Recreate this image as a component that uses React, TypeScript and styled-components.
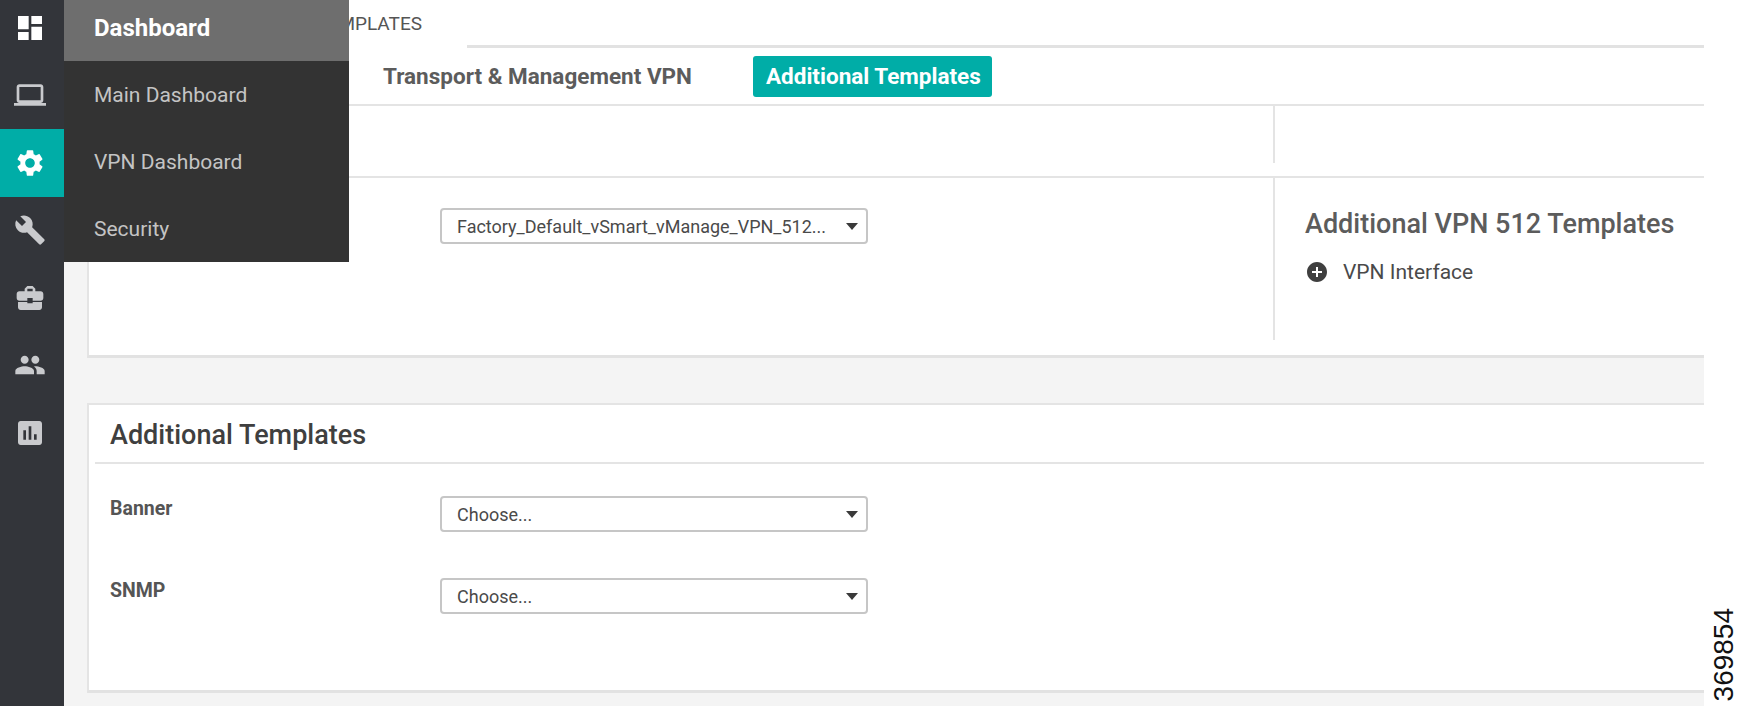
import React from 'react';
import styled, { createGlobalStyle } from 'styled-components';
import {
  MdDashboard,
  MdLaptop,
  MdSettings,
  MdBuild,
  MdBusinessCenter,
  MdPeople,
  MdAssessment,
  MdAddCircle,
} from 'react-icons/md';

const GlobalStyle = createGlobalStyle`
  html, body {
    margin: 0;
    padding: 0;
    background: #fff;
    font-family: Roboto, "Liberation Sans", sans-serif;
  }
`;

const Page = styled.div`
  position: relative;
  display: flex;
  width: 1738px;
  height: 706px;
  overflow: hidden;
  background: #fff;
`;

// left icon rail

const Rail = styled.nav`
  flex: 0 0 64px;
  background: #33353a;
  overflow: hidden;
`;

const RailList = styled.div`
  margin-top: -6px;
`;

const RailItem = styled.div<{ $active?: boolean; $bright?: boolean }>`
  display: flex;
  align-items: center;
  justify-content: center;
  height: 67.5px;
  padding-right: 4px;
  background: ${(props) => (props.$active ? '#00ada7' : 'transparent')};
  color: ${(props) => (props.$active || props.$bright ? '#fff' : '#c9cacd')};
`;

// dashboard flyout

const Flyout = styled.div`
  position: absolute;
  left: 64px;
  top: 0;
  width: 285px;
  height: 262px;
  background: #333;
`;

const FlyoutHead = styled.div`
  display: flex;
  align-items: center;
  height: 61px;
  padding: 0 0 5px 30px;
  box-sizing: border-box;
  background: #6e6e6e;
  color: #fff;
  font-size: 24px;
  font-weight: 700;
`;

const FlyoutItem = styled.div`
  display: flex;
  align-items: center;
  height: 67px;
  padding-left: 30px;
  color: #c4c4c4;
  font-size: 21px;
`;

// main content

const Main = styled.main`
  flex: 0 0 1640px;
  display: flex;
  flex-direction: column;
  background: #f4f4f4;
`;

const TabBar = styled.div`
  display: flex;
  height: 48px;
  background: #fff;
`;

const Tab = styled.div`
  display: flex;
  align-items: center;
  justify-content: flex-end;
  width: 403px;
  height: 47px;
  padding-right: 45px;
  box-sizing: border-box;
  color: #555;
  font-size: 19px;
`;

const TabRest = styled.div`
  flex: 1;
  border-bottom: 3px solid #e2e2e2;
`;

const SubTabs = styled.div`
  display: flex;
  align-items: center;
  gap: 61px;
  height: 58px;
  padding-left: 319px;
  box-sizing: border-box;
  background: #fff;
  border-bottom: 2px solid #e4e4e4;
`;

const SubTab = styled.div<{ $active?: boolean }>`
  display: flex;
  align-items: center;
  height: 41px;
  padding: ${(props) => (props.$active ? '0 11px 0 13px' : '0')};
  border-radius: 3px;
  background: ${(props) => (props.$active ? '#00ada7' : 'transparent')};
  color: ${(props) => (props.$active ? '#fff' : '#5c5c5c')};
  font-size: 22.5px;
  font-weight: 700;
`;

const SpacerRow = styled.div`
  display: flex;
  height: 72px;
  box-sizing: border-box;
  background: #fff;
  border-bottom: 2px solid #e4e4e4;
`;

const SpacerCell = styled.div`
  width: 1209px;
  height: 57px;
  border-right: 2px solid #e4e4e4;
`;

const Card = styled.section<{ $height: number; $top?: number }>`
  height: ${(props) => props.$height}px;
  margin: ${(props) => props.$top ?? 0}px 0 0 23px;
  box-sizing: border-box;
  background: #fff;
  border-left: 2px solid #e4e4e4;
  border-bottom: 3px solid #e2e2e2;
`;

const TopCard = styled(Card)`
  display: flex;
`;

const LowerCard = styled(Card)`
  border-top: 2px solid #e4e4e4;
`;

const FormColumn = styled.div`
  width: 1186px;
  height: 162px;
  padding: 30px 0 0 351px;
  box-sizing: border-box;
  border-right: 2px solid #e4e4e4;
`;

const SideColumn = styled.div`
  padding: 30px 0 0 30px;
`;

const SideTitle = styled.h3`
  margin: 0;
  color: #5c5c5c;
  font-size: 27px;
  font-weight: 500;
  line-height: 32px;
`;

const AddRow = styled.div`
  display: flex;
  align-items: center;
  gap: 16px;
  margin-top: 20px;
  padding-left: 2px;
  color: #4a4a4a;
  font-size: 21px;
`;

const PlusIcon = styled(MdAddCircle)`
  color: #3f3f3f;
  margin: -2px;
`;

const SectionTitle = styled.h2`
  display: flex;
  align-items: center;
  height: 59px;
  margin: 0 0 0 6px;
  padding: 2px 0 0 15px;
  box-sizing: border-box;
  border-bottom: 2px solid #e4e4e4;
  color: #3f3f3f;
  font-size: 27px;
  font-weight: 500;
`;

const Form = styled.div`
  display: flex;
  flex-direction: column;
  gap: 46px;
  padding: 32px 0 0 21px;
`;

const FormRow = styled.div`
  display: flex;
`;

const Label = styled.label`
  width: 330px;
  color: #555;
  font-size: 19.5px;
  font-weight: 700;
  line-height: 26px;
`;

const Select = styled.div`
  display: flex;
  align-items: center;
  justify-content: space-between;
  width: 428px;
  height: 36px;
  padding: 0 8px 0 15px;
  box-sizing: border-box;
  background: #fff;
  border: 2px solid #c6c6c6;
  border-radius: 4px;
  color: #4a4a4a;
  font-size: 18px;
`;

const Caret = styled.span`
  width: 0;
  height: 0;
  border-left: 6.5px solid transparent;
  border-right: 6.5px solid transparent;
  border-top: 7px solid #3a3a3a;
`;

const FigureNumber = styled.div`
  position: absolute;
  right: 0;
  bottom: 5px;
  writing-mode: vertical-rl;
  transform: rotate(180deg);
  color: #111;
  font-family: "Liberation Sans", Arial, sans-serif;
  font-size: 28px;
  line-height: 28px;
`;

const railIcons = [
  { icon: MdDashboard, bright: true },
  { icon: MdLaptop },
  { icon: MdSettings, active: true },
  { icon: MdBuild },
  { icon: MdBusinessCenter },
  { icon: MdPeople },
  { icon: MdAssessment },
];

const App = () => {
  return (
    <Page>
      <GlobalStyle />
      <Rail>
        <RailList>
          {railIcons.map(({ icon: Icon, active, bright }, i) => (
            <RailItem key={i} $active={active} $bright={bright}>
              <Icon size={32} />
            </RailItem>
          ))}
        </RailList>
      </Rail>

      <Main>
        <TabBar>
          <Tab>FEATURE TEMPLATES</Tab>
          <TabRest />
        </TabBar>
        <SubTabs>
          <SubTab>Transport &amp; Management VPN</SubTab>
          <SubTab $active>Additional Templates</SubTab>
        </SubTabs>
        <SpacerRow>
          <SpacerCell />
        </SpacerRow>

        <TopCard $height={180}>
          <FormColumn>
            <Select>
              Factory_Default_vSmart_vManage_VPN_512...
              <Caret />
            </Select>
          </FormColumn>
          <SideColumn>
            <SideTitle>Additional VPN 512 Templates</SideTitle>
            <AddRow>
              <PlusIcon size={24} />
              VPN Interface
            </AddRow>
          </SideColumn>
        </TopCard>

        <LowerCard $height={290} $top={45}>
          <SectionTitle>Additional Templates</SectionTitle>
          <Form>
            <FormRow>
              <Label>Banner</Label>
              <Select>
                Choose...
                <Caret />
              </Select>
            </FormRow>
            <FormRow>
              <Label>SNMP</Label>
              <Select>
                Choose...
                <Caret />
              </Select>
            </FormRow>
          </Form>
        </LowerCard>
      </Main>

      <Flyout>
        <FlyoutHead>Dashboard</FlyoutHead>
        <FlyoutItem>Main Dashboard</FlyoutItem>
        <FlyoutItem>VPN Dashboard</FlyoutItem>
        <FlyoutItem>Security</FlyoutItem>
      </Flyout>

      <FigureNumber>369854</FigureNumber>
    </Page>
  );
};

export default App;
